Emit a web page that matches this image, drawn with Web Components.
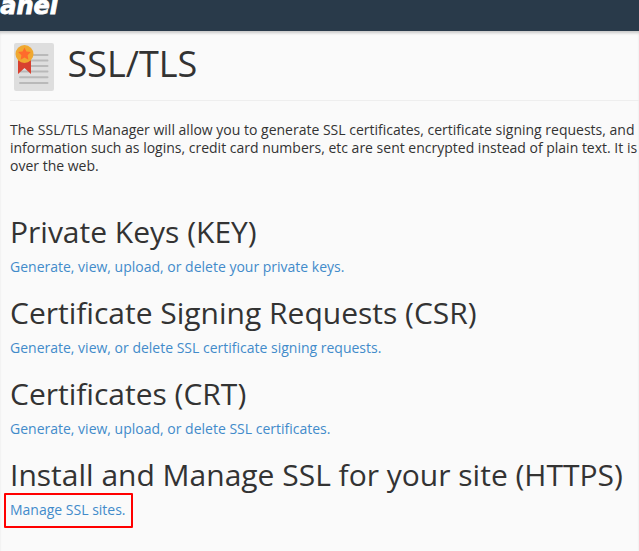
<!DOCTYPE html>
<html lang="en">
<head>
<meta charset="utf-8">
<title>SSL/TLS</title>
<style>
    body {
        margin: 0;
        height: 551px;
        overflow: hidden;
        background: #fafafa;
        color: #333;
        font-family: "Open Sans", "Noto Sans", sans-serif;
        font-size: 14px;
    }
</style>
</head>
<body>
<panel-header>anel</panel-header>
<panel-page>
    <page-title>SSL/TLS</page-title>
    <page-intro>
        <div>The SSL/TLS Manager will allow you to generate SSL certificates, certificate signing requests, and</div>
        <div>information such as logins, credit card numbers, etc are sent encrypted instead of plain text. It is</div>
        <div>over the web.</div>
    </page-intro>
    <link-section heading="Private Keys (KEY)">Generate, view, upload, or delete your private keys.</link-section>
    <link-section heading="Certificate Signing Requests (CSR)">Generate, view, or delete SSL certificate signing requests.</link-section>
    <link-section heading="Certificates (CRT)">Generate, view, upload, or delete SSL certificates.</link-section>
    <link-section heading="Install and Manage SSL for your site (HTTPS)" marked>Manage SSL sites.</link-section>
</panel-page>

<script>
class PanelHeader extends HTMLElement {
    constructor() {
        super();
        this.attachShadow({ mode: 'open' });
        this.shadowRoot.innerHTML = `
            <style>
                :host {
                    display: block;
                    height: 31px;
                    overflow: hidden;
                    background: #293a4a;
                }

                .logo {
                    width: 58px;
                    display: flex;
                    justify-content: flex-end;
                    margin-top: -8px;
                    color: #fff;
                    font: italic 700 24px/28px "DejaVu Sans", sans-serif;
                    -webkit-text-stroke: 0.9px #fff;
                }
            </style>
            <div class="logo"><slot></slot></div>
        `;
    }
}
customElements.define('panel-header', PanelHeader);

class PanelPage extends HTMLElement {
    constructor() {
        super();
        this.attachShadow({ mode: 'open' });
        this.shadowRoot.innerHTML = `
            <style>
                :host {
                    display: block;
                    box-sizing: border-box;
                    height: 520px;
                    padding: 0 0 0 10px;
                    box-shadow: inset 0 3px 3px -1px rgba(0, 0, 0, 0.2);
                    white-space: nowrap;
                }
            </style>
            <slot></slot>
        `;
    }
}
customElements.define('panel-page', PanelPage);

class CertificateIcon extends HTMLElement {
    constructor() {
        super();
        this.attachShadow({ mode: 'open' });
        this.shadowRoot.innerHTML = `
            <style>
                :host {
                    display: block;
                    width: 41px;
                    height: 48px;
                }

                svg {
                    display: block;
                }
            </style>
            <svg width="41" height="48" viewBox="0 0 41 48">
                <rect width="40" height="48" rx="2" fill="#dedede"/>
                <path d="M6 12H33.5M6 17.5H33.5M6 23H33.5M6 28.5H33.5M6 34.2H33.5M6 40H33.5" stroke="#b9b9b9" stroke-width="2" stroke-linecap="round"/>
                <path d="M4 15H17V31L10.5 25L4 31Z" fill="#d8402f"/>
                <circle cx="10.5" cy="11" r="9" fill="#f0a830"/>
                <path d="M10.5 4.5L12.4 8.6L16.8 9.1L13.6 12.2L14.4 16.7L10.5 14.5L6.6 16.7L7.4 12.2L4.2 9.1L8.6 8.6Z" fill="#ff6b2c"/>
            </svg>
        `;
    }
}
customElements.define('certificate-icon', CertificateIcon);

class PageTitle extends HTMLElement {
    constructor() {
        super();
        this.attachShadow({ mode: 'open' });
        this.shadowRoot.innerHTML = `
            <style>
                :host {
                    display: flex;
                    box-sizing: border-box;
                    height: 70px;
                    padding: 12px 0 0 4px;
                    border-bottom: 1px solid #eee;
                }

                h1 {
                    margin: -3px 0 0 12.5px;
                    font-size: 36px;
                    font-weight: 400;
                    line-height: 48px;
                }
            </style>
            <certificate-icon></certificate-icon>
            <h1><slot></slot></h1>
        `;
    }
}
customElements.define('page-title', PageTitle);

class PageIntro extends HTMLElement {
    constructor() {
        super();
        this.attachShadow({ mode: 'open' });
        this.shadowRoot.innerHTML = `
            <style>
                :host {
                    display: block;
                    margin: 20px 0 37px;
                    line-height: 18px;
                }
            </style>
            <slot></slot>
        `;
    }
}
customElements.define('page-intro', PageIntro);

class LinkSection extends HTMLElement {
    constructor() {
        super();
        this.attachShadow({ mode: 'open' });
        this.render();
    }

    render() {
        this.shadowRoot.innerHTML = `
            <style>
                :host {
                    display: block;
                    height: 81px;
                }

                h2 {
                    margin: 0;
                    font-size: 30px;
                    font-weight: 400;
                    line-height: 40px;
                }

                a {
                    display: block;
                    width: max-content;
                    margin-top: 6px;
                    line-height: 18px;
                    color: #428bca;
                    text-decoration: none;
                }

                /* frame around the highlighted link */
                :host([marked]) a {
                    box-sizing: border-box;
                    width: 129px;
                    height: 35px;
                    margin: -2px 0 0 -6px;
                    padding: 6px 0 0 4px;
                    border: 2px solid #f00;
                    border-radius: 1px;
                }
            </style>
            <h2>${this.getAttribute('heading')}</h2>
            <a href="#"><slot></slot></a>
        `;
    }
}
customElements.define('link-section', LinkSection);
</script>
</body>
</html>
